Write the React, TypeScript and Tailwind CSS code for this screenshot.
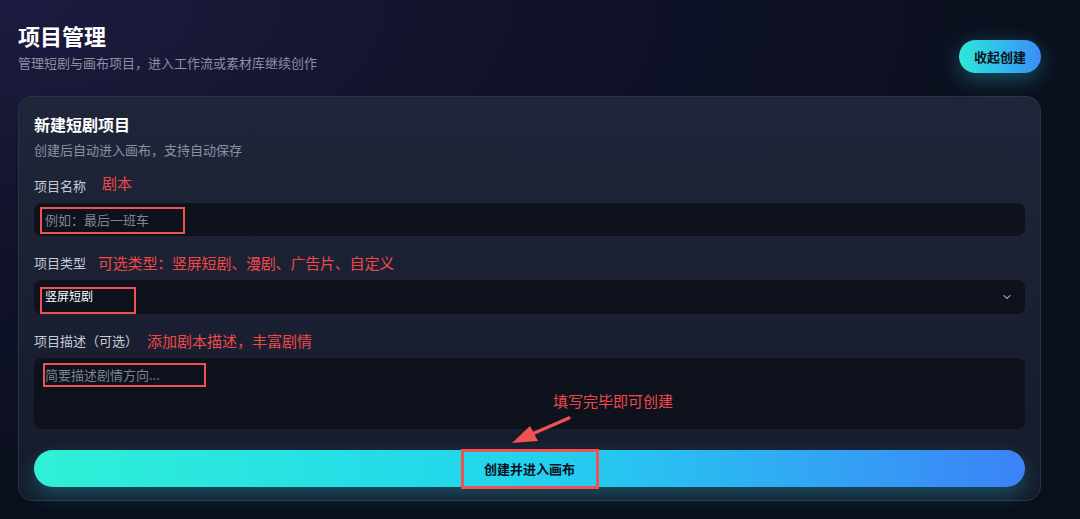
import React from "react";

const font = { fontFamily: '"Noto Sans CJK SC", "Noto Sans", sans-serif' };

function Chevron() {
  return (
    <svg width="12" height="12" viewBox="0 0 24 24" fill="none" stroke="#8b93a7" strokeWidth="2.2" strokeLinecap="round" strokeLinejoin="round">
      <path d="M6 9l6 6 6-6" />
    </svg>
  );
}

function Arrow() {
  return (
    <svg width="80" height="44" viewBox="0 0 80 44" className="absolute left-[470px] top-[52px]">
      <path d="M65 8 L28 24" stroke="#f05252" strokeWidth="3.2" strokeLinecap="round" />
      <path d="M8 33 L26 16 L34 31 Z" fill="#f05252" />
    </svg>
  );
}

export default function App() {
  return (
    <div
      style={font}
      className="min-h-[519px] w-full bg-[radial-gradient(ellipse_at_0%_0%,#1d1b40_0%,#10132a_35%,#0a0f1c_70%)] px-[18px]"
    >
      {/* header */}
      <div className="flex items-start justify-between">
        <div className="pt-[20px]">
          <h1 className="text-[22px] leading-[30px] font-bold text-white">项目管理</h1>
          <p className="mt-[4px] text-[13px] leading-[18px] text-[#8a91a1]">
            管理短剧与画布项目，进入工作流或素材库继续创作
          </p>
        </div>
        <button className="mt-[40px] mr-[21px] h-[33px] rounded-full bg-gradient-to-r from-[#2ee8d8] to-[#3b8cf6] px-[15px] text-[13px] font-bold text-[#0b1220] shadow-[0_6px_22px_rgba(34,211,238,0.35)]">
          收起创建
        </button>
      </div>

      {/* card */}
      <div className="mt-[23px] mr-[21px] rounded-[14px] border border-[#2a3247] bg-gradient-to-b from-[#1f2639] to-[#161b2b] px-[15px] pt-[15px] pb-[13px]">
        <h2 className="text-[16px] leading-[24px] font-bold text-white">新建短剧项目</h2>
        <p className="mt-[4px] text-[13px] leading-[20px] text-[#8a91a1]">创建后自动进入画布，支持自动保存</p>

        {/* name */}
        <div className="mt-[16px] flex items-center">
          <span className="text-[13px] leading-[20px] text-[#c6cbd5]">项目名称</span>
          <span className="ml-[16px] -mt-[6px] text-[15px] leading-[20px] text-[#f04848]">剧本</span>
        </div>
        <div className="relative mt-[7px] flex h-[33px] items-center rounded-[8px] bg-[#0e121d] pl-[11px]">
          <span className="text-[13px] text-[#7d8493]">例如：最后一班车</span>
          <div className="absolute left-[6px] top-[4px] h-[27px] w-[145px] border-2 border-[#f05252]" />
        </div>

        {/* type */}
        <div className="mt-[17px] flex items-center">
          <span className="text-[13px] leading-[20px] text-[#c6cbd5]">项目类型</span>
          <span className="ml-[12px] text-[15px] leading-[20px] tracking-[-0.2px] text-[#f04848]">可选类型：竖屏短剧、漫剧、广告片、自定义</span>
        </div>
        <div className="relative mt-[7px] flex h-[34px] items-center justify-between rounded-[8px] bg-[#0e121d] pl-[11px] pr-[12px]">
          <span className="-mt-[2px] text-[12px] text-white">竖屏短剧</span>
          <Chevron />
          <div className="absolute left-[6px] top-[7px] h-[27px] w-[96px] border-2 border-[#f05252]" />
        </div>

        {/* description */}
        <div className="mt-[17px] flex items-center">
          <span className="text-[13px] leading-[20px] text-[#c6cbd5]">项目描述（可选）</span>
          <span className="ml-[9px] text-[15px] leading-[20px] text-[#f04848]">添加剧本描述，丰富剧情</span>
        </div>
        <div className="relative mt-[7px] h-[71px] rounded-[8px] bg-[#0e121d] pl-[11px] pt-[8px]">
          <span className="block text-[13px] leading-[18px] text-[#7d8493]">简要描述剧情方向...</span>
          <div className="absolute left-[9px] top-[5px] h-[24px] w-[163px] border-[2.5px] border-[#f05252]" />
          <span className="absolute left-[519px] top-[33px] text-[15px] leading-[20px] text-[#f04848]">填写完毕即可创建</span>
          <Arrow />
        </div>

        {/* submit */}
        <div className="relative mt-[21px]">
          <button className="flex h-[37px] w-full items-center justify-center rounded-full bg-gradient-to-r from-[#30f0d6] via-[#22d3ee] to-[#3b82f6] text-[13px] font-bold text-[#0b1220] shadow-[0_8px_20px_rgba(34,211,238,0.28)]">
            创建并进入画布
          </button>
          <div className="absolute left-[427px] -top-[1px] h-[40px] w-[138px] border-[3px] border-[#f05252]" />
        </div>
      </div>
    </div>
  );
}
